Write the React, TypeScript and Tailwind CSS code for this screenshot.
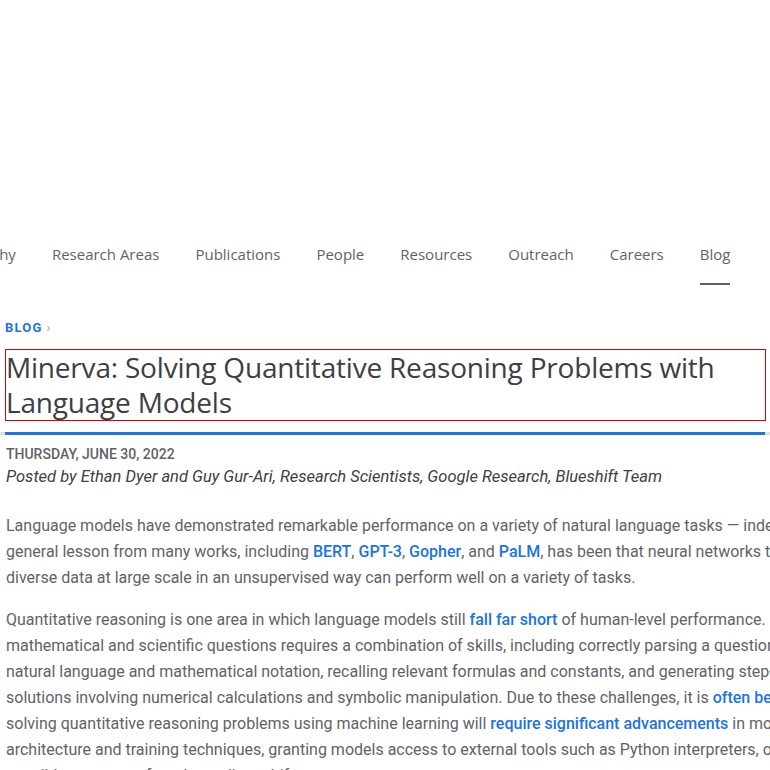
const NAV = ["Philosophy", "Research Areas", "Publications", "People", "Resources", "Outreach", "Careers", "Blog"];

function A({ children }: { children: React.ReactNode }) {
  return <a className="font-medium text-[#1a73e8]">{children}</a>;
}

export default function App() {
  return (
    <div className="relative h-[770px] w-[770px] overflow-hidden bg-white font-['Roboto',sans-serif]">
      <div className="h-[243px]" />
      <nav className="-ml-[61px] flex gap-9 whitespace-nowrap font-['Open_Sans',sans-serif] text-[15px] leading-[22px] text-[#5f6368]">
        {NAV.map((n) => (
          <span key={n} className={`border-b-2 pb-[18px] ${n === "Blog" ? "border-[#5f6368]" : "border-transparent"}`}>
            {n}
          </span>
        ))}
      </nav>

      <div className="mt-[35px] flex items-center gap-1 pl-[5px] text-[13px] leading-4">
        <span className="font-bold tracking-[1.2px] text-[#1a73e8]">BLOG</span>
        <span className="text-[#9aa0a6]">›</span>
      </div>

      <h1 className="mx-[5px] mt-[13px] w-[761px] border border-[#d00] font-['Open_Sans',sans-serif] text-[28px] leading-[35px] tracking-[-0.2px] text-[#3c4043]">
        Minerva: Solving Quantitative Reasoning Problems with Language Models
      </h1>

      <div className="mt-[11px] h-[3px] bg-[#e0e0e0] px-[5px]">
        <div className="h-full bg-[#1a73e8]" />
      </div>

      <div className="pl-[6px] whitespace-nowrap">
        <div className="mt-[9px] text-[14px] font-medium leading-5 text-[#5f6368]">THURSDAY, JUNE 30, 2022</div>
        <div className="mt-[1px] text-[16.5px] italic leading-6 text-[#3c4043]">
          Posted by Ethan Dyer and Guy Gur-Ari, Research Scientists, Google Research, Blueshift Team
        </div>

        <div className="mt-6 text-[16px] leading-[26px] text-[#5f6368]">
          <p>Language models have demonstrated remarkable performance on a variety of natural language tasks — indeed, a</p>
          <p>
            general lesson from many works, including <A>BERT</A>, <A>GPT-3</A>, <A>Gopher</A>, and <A>PaLM</A>, has been that neural networks trained on
          </p>
          <p>diverse data at large scale in an unsupervised way can perform well on a variety of tasks.</p>
        </div>

        <div className="mt-4 text-[16px] leading-[26px] text-[#5f6368]">
          <p>
            Quantitative reasoning is one area in which language models still <A>fall far short</A> of human-level performance. Solving
          </p>
          <p>mathematical and scientific questions requires a combination of skills, including correctly parsing a question with</p>
          <p>natural language and mathematical notation, recalling relevant formulas and constants, and generating step-by-step</p>
          <p>
            solutions involving numerical calculations and symbolic manipulation. Due to these challenges, it is <A>often believed</A> that
          </p>
          <p>
            solving quantitative reasoning problems using machine learning will <A>require significant advancements</A> in model
          </p>
          <p>architecture and training techniques, granting models access to external tools such as Python interpreters, or</p>
          <p>possibly a more profound paradigm shift.</p>
        </div>
      </div>
    </div>
  );
}
